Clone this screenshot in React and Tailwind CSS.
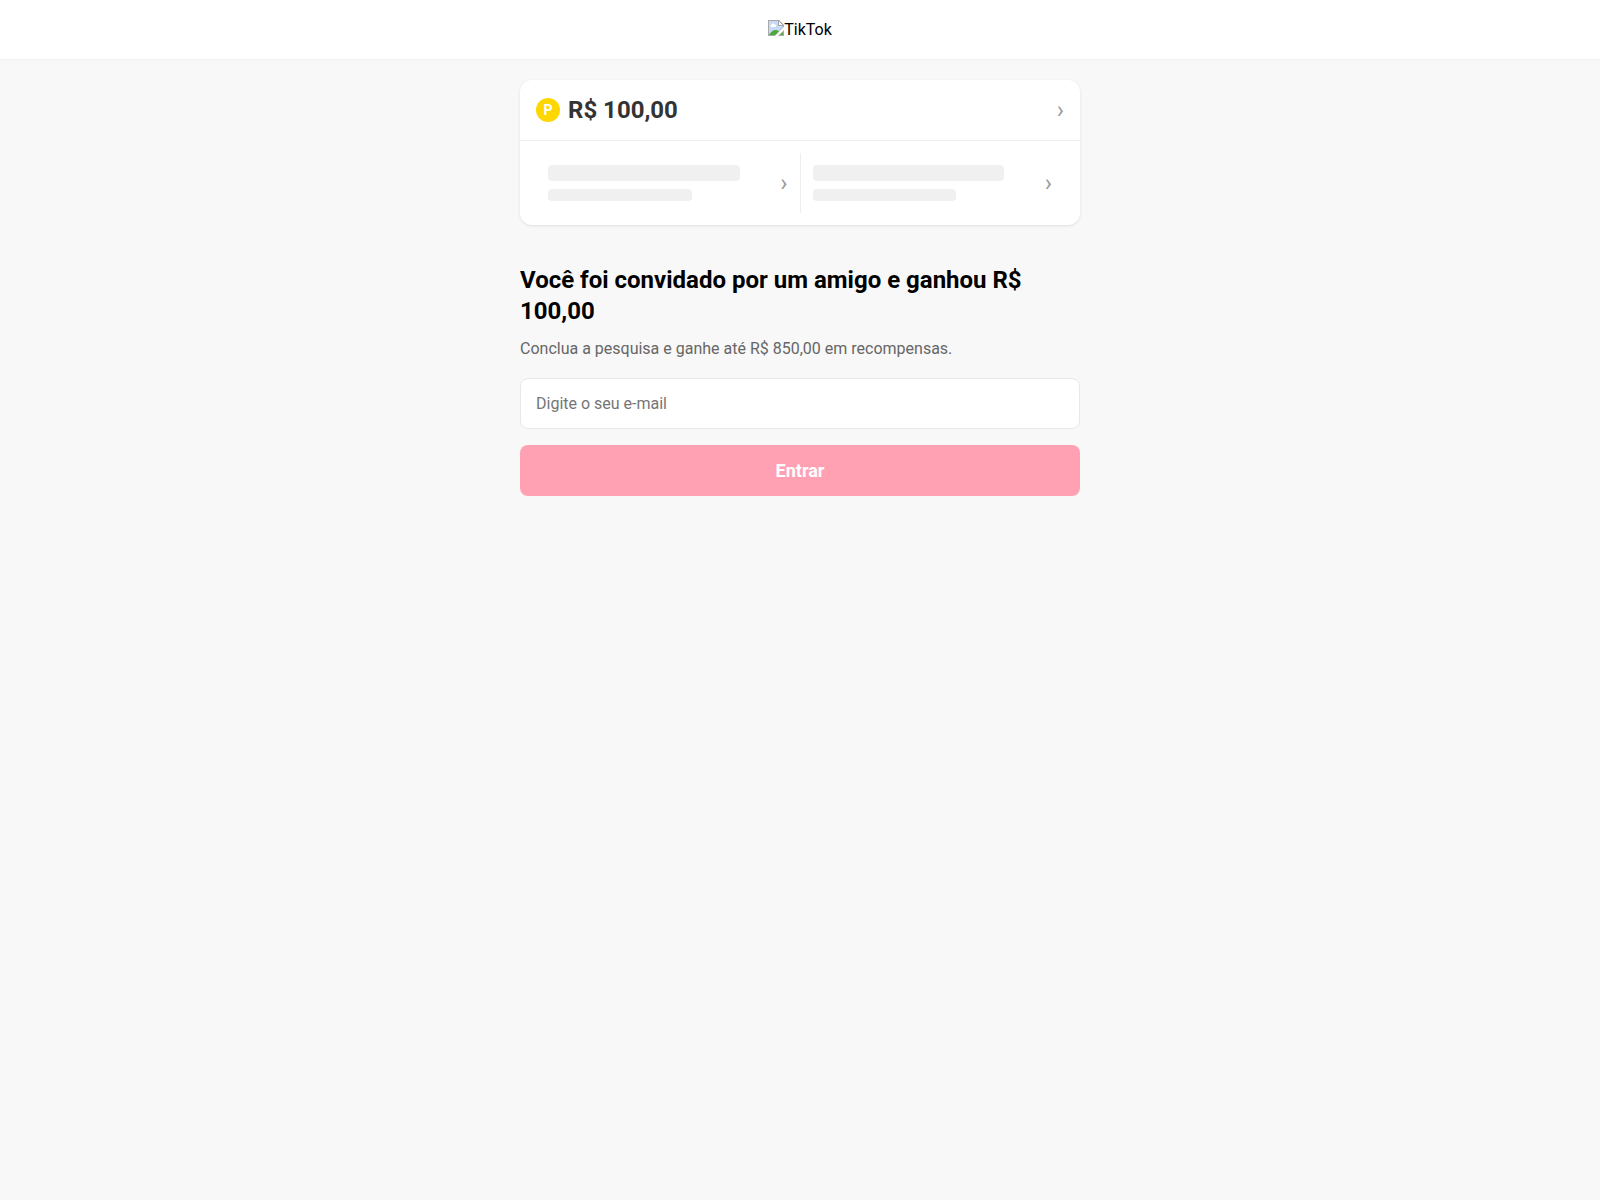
import React, { useState } from "react";

const Logo = () => (
  <div className="flex items-start" role="img" aria-label="TikTok">
    <svg width="16" height="16" viewBox="0 0 16 16" className="shrink-0">
      <path d="M0 0H11L16 5V7L7 16H0Z" fill="#a9a9a9" />
      <path d="M1 1H10.5L15 5.5V7L7 15H1Z" fill="#c6d9f7" />
      <path d="M3 7a1.5 1.5 0 0 1 0.6-2.5a1.8 1.8 0 0 1 3.2 0a1.4 1.4 0 0 1 0.9 2.5Z" fill="#fff" />
      <path d="M1 15C2.5 12 5 10 7.5 10C9 10 10 10.5 11 11.5L7.5 15Z" fill="#4fa83d" />
      <path d="M10.5 0.5V5.5H15.5Z" fill="#fff" stroke="#a3a3a3" />
      <path d="M7 16L16 7V10L10 16Z" fill="#fff" />
      <path d="M16 10V16H10Z" fill="#a9a9a9" />
      <path d="M15 12V15H12Z" fill="#4fa83d" />
    </svg>
    <span className="text-base leading-[19px]">TikTok</span>
  </div>
);

const Chevron = () => <span className="text-2xl leading-7 text-[#999]">›</span>;

const SkeletonItem = () => (
  <div className="flex flex-1 items-center justify-between p-3">
    <div className="w-4/5 space-y-2">
      <div className="h-4 w-full rounded bg-[#f0f0f0]" />
      <div className="h-3 w-3/4 rounded bg-[#f0f0f0]" />
    </div>
    <Chevron />
  </div>
);

const BalanceCard = () => (
  <section className="rounded-xl bg-white shadow-[0_1px_3px_rgba(0,0,0,0.1)]">
    <div className="flex items-center justify-between border-b border-[#eee] p-4">
      <div className="flex items-center gap-2">
        <span className="flex h-6 w-6 items-center justify-center rounded-full bg-[#ffd700] text-sm font-bold text-white">
          P
        </span>
        <span className="text-2xl leading-7 font-bold text-[#333]">R$ 100,00</span>
      </div>
      <Chevron />
    </div>
    <div className="flex px-4 py-3">
      <SkeletonItem />
      <div className="w-px bg-[#eee]" />
      <SkeletonItem />
    </div>
  </section>
);

const LoginForm = () => {
  const [email, setEmail] = useState("");

  return (
    <form onSubmit={(e) => e.preventDefault()}>
      <input
        type="email"
        aria-label="E-mail"
        placeholder="Digite o seu e-mail"
        value={email}
        onChange={(e) => setEmail(e.target.value)}
        className="mb-4 block w-full rounded-lg border border-[#e8e8e8] bg-white px-[15px] py-4 text-base leading-[17px] outline-none placeholder:text-[#757575]"
      />
      <button
        type="submit"
        disabled={!email}
        className="block w-full rounded-lg bg-[#fe2c55] py-[15px] text-lg leading-[21px] font-bold text-white disabled:bg-[#ffa1b3]"
      >
        Entrar
      </button>
    </form>
  );
};

export default function App() {
  return (
    <div className="min-h-screen bg-[#f8f8f8] font-['Roboto',sans-serif] text-black">
      <header className="flex justify-center border-b border-[#f0f0f0] bg-white py-5">
        <Logo />
      </header>

      <main className="mx-auto max-w-[600px] p-5">
        <BalanceCard />

        <h1 className="mt-10 text-2xl leading-[31px] font-bold">
          Você foi convidado por um amigo e ganhou R$ 100,00
        </h1>
        <p className="mt-3 mb-5 text-base leading-[19px] text-[#666]">
          Conclua a pesquisa e ganhe até R$ 850,00 em recompensas.
        </p>

        <LoginForm />
      </main>
    </div>
  );
}
